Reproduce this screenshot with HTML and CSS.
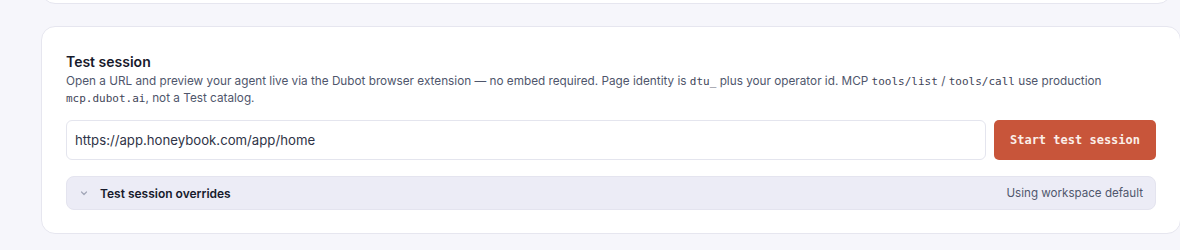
FILE: index.html
```html
<!DOCTYPE html>
<html lang="en">
<head>
<meta charset="utf-8">
<link rel="stylesheet" href="styles.css">
</head>
<body>
<div class="page">
  <div class="card card-top"></div>
  <section class="card">
    <h2 class="title">Test session</h2>
    <p class="desc">Open a URL and preview your agent live via the Dubot browser extension — no embed required. Page identity is <code>dtu_</code> plus your operator id. MCP <code>tools/list</code> / <code>tools/call</code> use production <code>mcp.dubot.ai</code>, not a Test catalog.</p>
    <div class="row">
      <input class="url" type="text" value="https://app.honeybook.com/app/home">
      <button class="btn">Start test session</button>
    </div>
    <div class="overrides">
      <div class="ov-left">
        <svg class="chev" width="10" height="10" viewBox="0 0 10 10"><path d="M2.5 4 L5 6.5 L7.5 4" fill="none" stroke="#a3a7b8" stroke-width="1.2" stroke-linecap="round" stroke-linejoin="round"/></svg>
        <span class="ov-title">Test session overrides</span>
      </div>
      <span class="ov-note">Using workspace default</span>
    </div>
  </section>
</div>
</body>
</html>
```
FILE: styles.css
```css
* { box-sizing: border-box; }
html, body { margin: 0; padding: 0; }
body {
  background: #f6f6fb;
  font-family: Inter, "Noto Sans", sans-serif;
  overflow: hidden;
  width: 1180px;
  height: 250px;
}
.page {
  padding-left: 41px;
  display: flex;
  flex-direction: column;
  gap: 22px;
  margin-top: -60px;
}
.card {
  width: 1140px;
  flex-shrink: 0;
  background: #fff;
  border: 1px solid #e6e6ef;
  border-radius: 14px;
  padding: 25px 24px 23px 24px;
}
.card-top {
  height: 64px;
  width: 1131px;
}
.title {
  margin: 0;
  font-size: 14px;
  font-weight: 600;
  line-height: 19px;
  color: #171a2c;
}
.desc {
  margin: 2px 0 0;
  font-size: 11.75px;
  line-height: 17px;
  color: #4f566c;
}
.desc code {
  font-family: "DejaVu Sans Mono", monospace;
  font-size: 11px;
  color: #3f4558;
}
.row {
  display: flex;
  gap: 8px;
  margin-top: 13px;
}
.url {
  flex: 1;
  height: 40px;
  border: 1px solid #e4e5ee;
  border-radius: 6px;
  padding: 0 8px;
  font-family: Inter, sans-serif;
  font-size: 13.2px;
  color: #2f3447;
  background: #fff;
  outline: none;
}
.btn {
  width: 162px;
  height: 40px;
  border: none;
  border-radius: 5px;
  background: #c8553a;
  color: #fbeee8;
  font-family: "DejaVu Sans Mono", monospace;
  font-weight: bold;
  font-size: 12px;
  cursor: pointer;
}
.overrides {
  margin-top: 16px;
  height: 34px;
  background: #ececf6;
  border: 1px solid #e4e4ef;
  border-radius: 8px;
  display: flex;
  align-items: center;
  justify-content: space-between;
  padding: 0 12px 0 12px;
}
.ov-left {
  display: flex;
  align-items: center;
  gap: 11px;
}
.chev { display: block; }
.ov-title {
  font-size: 12px;
  font-weight: 600;
  color: #171a2c;
}
.ov-note {
  font-size: 11.6px;
  color: #50576d;
}
```
